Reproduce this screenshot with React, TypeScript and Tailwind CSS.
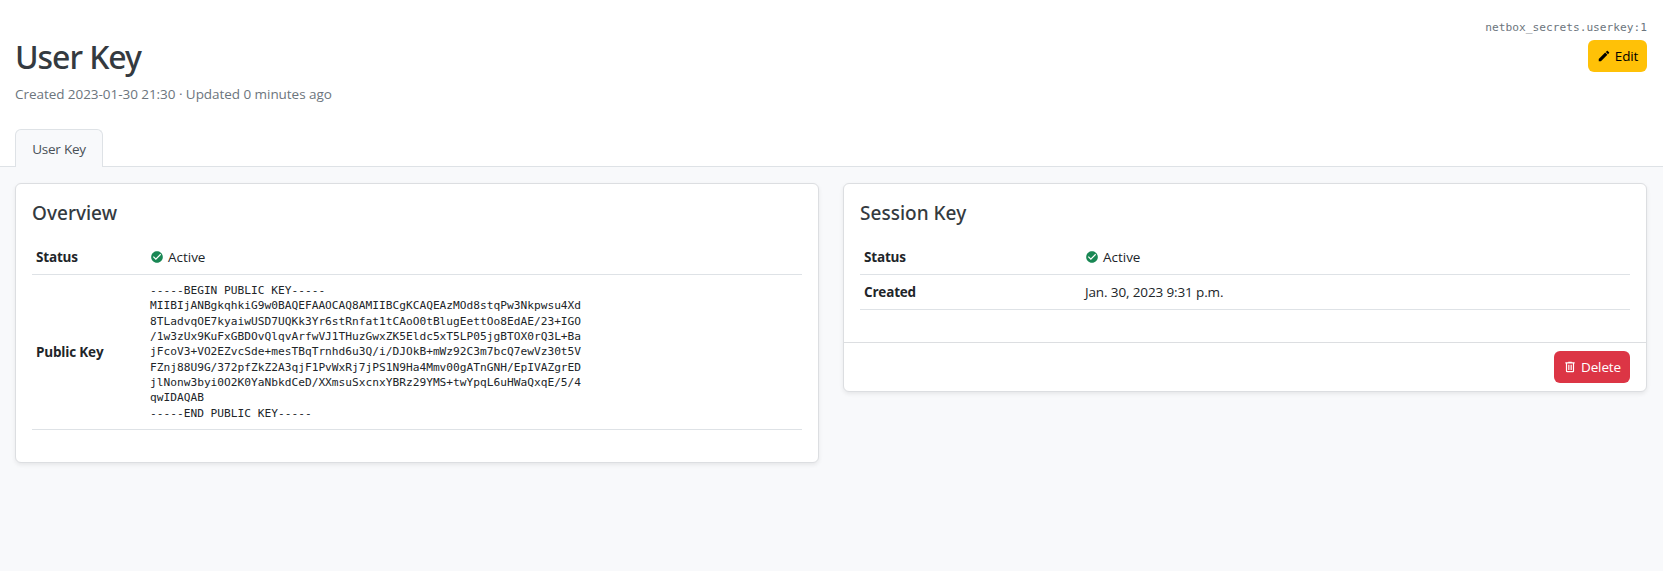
import React from "react";

const icons = {
  pencil:
    "M20.71,7.04C21.1,6.65 21.1,6 20.71,5.63L18.37,3.29C18,2.9 17.35,2.9 16.96,3.29L15.12,5.12L18.87,8.87M3,17.25V21H6.75L17.81,9.93L14.06,6.18L3,17.25Z",
  check:
    "M12 2C6.5 2 2 6.5 2 12S6.5 22 12 22 22 17.5 22 12 17.5 2 12 2M10 17L5 12L6.41 10.59L10 14.17L17.59 6.58L19 8L10 17Z",
  trash:
    "M9,3V4H4V6H5V19A2,2 0 0,0 7,21H17A2,2 0 0,0 19,19V6H20V4H15V3H9M7,6H17V19H7V6M9,8V17H11V8H9M13,8V17H15V8H13Z",
};

function Icon({ name, className = "" }: { name: keyof typeof icons; className?: string }) {
  return (
    <svg viewBox="0 0 24 24" fill="currentColor" className={`size-3.5 shrink-0 ${className}`}>
      <path d={icons[name]} />
    </svg>
  );
}

const publicKey = `-----BEGIN PUBLIC KEY-----
MIIBIjANBgkqhkiG9w0BAQEFAAOCAQ8AMIIBCgKCAQEAzMOd8stqPw3Nkpwsu4Xd
8TLadvqOE7kyaiwUSD7UQKk3Yr6stRnfat1tCAoO0tBlugEettOo8EdAE/23+IGO
/1w3zUx9KuFxGBDOvQlqvArfwVJ1THuzGwxZK5Eldc5xT5LP05jgBTOX0rQ3L+Ba
jFcoV3+VO2EZvcSde+mesTBqTrnhd6u3Q/i/DJOkB+mWz92C3m7bcQ7ewVz30t5V
FZnj88U9G/372pfZkZ2A3qjF1PvWxRj7jPS1N9Ha4Mmv00gATnGNH/EpIVAZgrED
jlNonw3byi0O2K0YaNbkdCeD/XXmsuSxcnxYBRz29YMS+twYpqL6uHWaQxqE/5/4
qwIDAQAB
-----END PUBLIC KEY-----`;

function Card({ title, footer, children }: { title: string; footer?: React.ReactNode; children: React.ReactNode }) {
  return (
    <section className="rounded-md border border-[#dcdee1] bg-white shadow-[0_2px_4px_rgba(0,0,0,0.075)]">
      <h5 className="px-4 pt-4 font-['Noto_Sans',sans-serif] text-[19px] leading-[27px] font-medium tracking-[0.02px] text-[#343a40]">
        {title}
      </h5>
      <div className="px-4 pt-[13px] pb-8">{children}</div>
      {footer}
    </section>
  );
}

function Row({ label, labelWidth, children }: { label: string; labelWidth: string; children: React.ReactNode }) {
  return (
    <div className="flex items-center border-b border-[#dee2e6] px-1 py-[7px] leading-5">
      <div className={`shrink-0 font-bold tracking-[-0.18px] ${labelWidth}`}>{label}</div>
      <div>{children}</div>
    </div>
  );
}

function Active() {
  return (
    <span className="flex items-center tracking-[-0.02px]">
      <Icon name="check" className="mr-1 text-[#198754]" />
      Active
    </span>
  );
}

export default function App() {
  return (
    <div className="min-h-screen bg-[#f8f9fb] font-['Open_Sans','Noto_Sans',sans-serif] text-[13.5px] tracking-[-0.13px] text-[#212529]">
      <header className="flex h-[167px] flex-col justify-between border-b border-[#dee2e6] bg-white pr-4 pl-[15px]">
        <div className="flex justify-between">
          <div className="pt-[37px]">
            <h1 className="font-['Noto_Sans',sans-serif] text-[32px] leading-10 font-medium tracking-[-1.05px] text-[#343a40]">
              User Key
            </h1>
            <p className="mt-[7px] leading-[21px] tracking-[-0.05px] text-[#6c757d]">
              Created 2023-01-30 21:30 · Updated 0 minutes ago
            </p>
          </div>
          <div className="flex flex-col items-end pt-5">
            <code className="font-['DejaVu_Sans_Mono',monospace] text-[11.2px] leading-[15px] tracking-normal text-[#6c757d]">
              netbox_secrets.userkey:1
            </code>
            <button className="mt-[5px] flex h-8 w-[59px] items-center justify-center gap-1 rounded-md bg-[#ffc107] text-black">
              <Icon name="pencil" />
              Edit
            </button>
          </div>
        </div>
        <nav className="-mb-px flex">
          <a className="flex h-[38px] w-[88px] items-center justify-center rounded-t-md border border-b-0 border-[#dee2e6] bg-[#f8f9fb] pt-0.5 tracking-[-0.25px] text-[#495057]">
            User Key
          </a>
        </nav>
      </header>
      <main className="grid grid-cols-2 items-start gap-6 pt-4 pr-4 pl-[15px]">
        <Card title="Overview">
          <Row label="Status" labelWidth="w-[114px]">
            <Active />
          </Row>
          <Row label="Public Key" labelWidth="w-[114px]">
            <pre className="h-[140px] py-[1px] font-['DejaVu_Sans_Mono',monospace] text-[11.2px] leading-[15.33px] tracking-[0px]">
              {publicKey}
            </pre>
          </Row>
        </Card>
        <Card
          title="Session Key"
          footer={
            <div className="flex justify-end border-t border-[#dcdee1] px-4 py-2">
              <button className="flex h-8 w-[76px] items-center justify-center gap-1 rounded-md bg-[#dc3545] text-white">
                <Icon name="trash" />
                Delete
              </button>
            </div>
          }
        >
          <Row label="Status" labelWidth="w-[221px]">
            <Active />
          </Row>
          <Row label="Created" labelWidth="w-[221px]">
            Jan. 30, 2023 9:31 p.m.
          </Row>
        </Card>
      </main>
    </div>
  );
}
